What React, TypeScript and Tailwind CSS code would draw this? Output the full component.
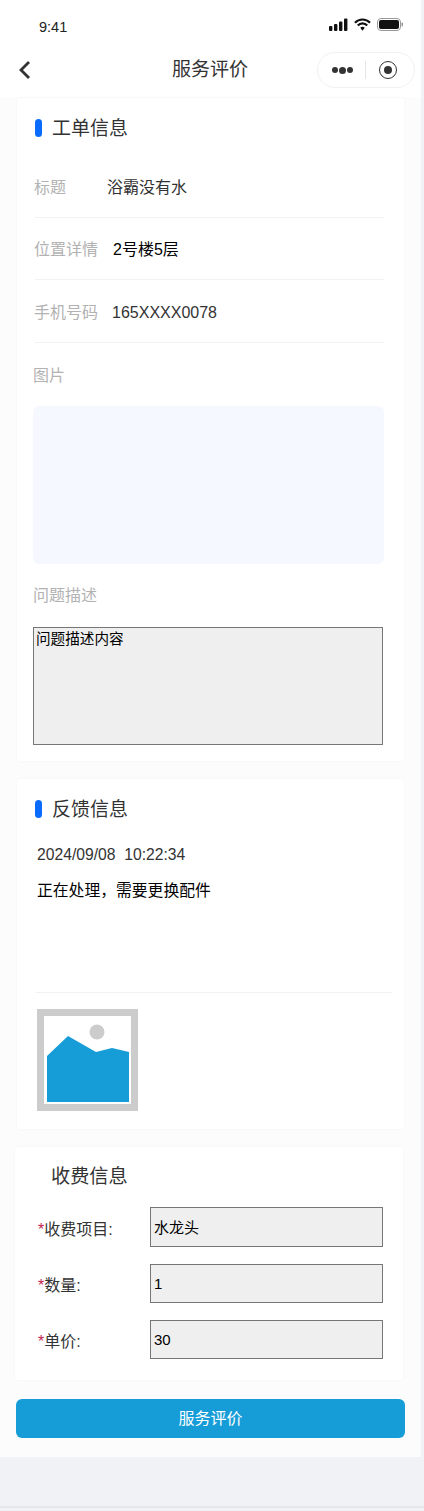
const font = "font-['Liberation_Sans','Noto_Sans_CJK_SC',sans-serif]"

function SectionTitle({ title }: { title: string }) {
  return (
    <div className="flex items-center h-[18px]">
      <span className="w-[7px] h-[18px] rounded-full bg-[#0a6cff]" />
      <span className="ml-[10px] pt-[2px] text-[19px] leading-[26px] text-[#333333]">{title}</span>
    </div>
  )
}

function InfoRow({ label, value, gap, valueClass }: { label: string; value: string; gap: string; valueClass: string }) {
  return (
    <div className="flex items-center h-[62.5px] pt-[4px] border-b border-[#f1f2f3] text-[16px]">
      <span className="-ml-[1px] text-[#b2b2b2]">{label}</span>
      <span className={`${gap} ${valueClass}`}>{value}</span>
    </div>
  )
}

function FeeRow({ label, value, height }: { label: string; value: string; height: string }) {
  return (
    <div className="flex items-center">
      <span className="shrink-0 w-[112px] ml-[23px] pt-[5px] text-[16px] leading-[22px] text-[#333333]">
        <span className="text-[#c2254d]">*</span>
        {label}:
      </span>
      <input
        readOnly
        value={value}
        className={`${height} w-[233px] border border-[#767676] bg-[#efefef] pl-[3px] pb-[1px] text-[15px] text-black outline-none`}
      />
    </div>
  )
}

export default function App() {
  return (
    <div className={`${font} w-[424px] h-[1511px] bg-[#f0f2f6] overflow-hidden`}>
      <div className="w-[421px] h-[1457px] bg-[#fcfcfd]">
        <div className="h-[97px] bg-white">
          <div className="flex items-center justify-between h-[52px] pl-[39px] pr-[17px]">
            <span className="text-[14.5px] mt-[3px] text-[#222222]">9:41</span>
            <div className="flex items-center gap-[6px] -mt-[3px]">
              <svg width="19" height="13" viewBox="0 0 19 13">
                <rect x="0" y="8" width="3.4" height="5" rx="1" fill="#111" />
                <rect x="5" y="6" width="3.4" height="7" rx="1" fill="#111" />
                <rect x="10" y="3.5" width="3.4" height="9.5" rx="1" fill="#111" />
                <rect x="15" y="0.5" width="3.4" height="12.5" rx="1" fill="#111" />
              </svg>
              <svg width="17" height="13" viewBox="0 0 18 13">
                <path d="M1 4.6 A11 11 0 0 1 17 4.6" fill="none" stroke="#111" strokeWidth="2.2" />
                <path d="M4 7.6 A6.6 6.6 0 0 1 14 7.6" fill="none" stroke="#111" strokeWidth="2.2" />
                <path d="M6.6 10 A3 3 0 0 1 11.4 10 L9 13 Z" fill="#111" />
              </svg>
              <svg width="27" height="13" viewBox="0 0 27 13">
                <rect x="0.5" y="0.5" width="23" height="12" rx="3.5" fill="none" stroke="#999" />
                <rect x="2" y="2" width="20" height="9" rx="2" fill="#111" />
                <rect x="24.5" y="4.5" width="1.5" height="4" rx="0.7" fill="#999" />
              </svg>
            </div>
          </div>
          <div className="relative flex items-center h-[36px]">
            <svg className="ml-[17px]" width="16" height="22" viewBox="0 0 16 22">
              <path d="M12 3 L4 11 L12 19" fill="none" stroke="#333333" strokeWidth="2.8" />
            </svg>
            <span className="absolute left-[172px] text-[19px] leading-[26px] text-[#333333]">服务评价</span>
            <div className="absolute left-[317px] w-[98px] h-[36px] rounded-full border border-[#f1f1f1] flex items-center">
              <div className="flex items-center gap-[1px] ml-[14px]">
                <span className="w-[6px] h-[6px] rounded-full bg-[#333333]" />
                <span className="w-[7px] h-[7px] rounded-full bg-[#333333]" />
                <span className="w-[6px] h-[6px] rounded-full bg-[#333333]" />
              </div>
              <span className="w-px h-[18px] bg-[#e5e5e5] ml-[12px]" />
              <span className="ml-[13px] w-[18px] h-[18px] rounded-full border-[1.5px] border-[#333333] flex items-center justify-center">
                <span className="w-2 h-2 rounded-full bg-[#333333]" />
              </span>
            </div>
          </div>
        </div>

        <div className="ml-[17px] w-[387px] h-[663px] mt-px bg-white rounded-[4px] shadow-[0_0_3px_rgba(0,0,0,0.04)] pt-[21px] pl-[18px] pr-[20px]">
          <SectionTitle title="工单信息" />
          <div className="mt-[18px]">
            <InfoRow label="标题" value="浴霸没有水" gap="ml-[41px]" valueClass="text-[#333333]" />
            <InfoRow label="位置详情" value="2号楼5层" gap="ml-[15px]" valueClass="text-black" />
            <InfoRow label="手机号码" value="165XXXX0078" gap="ml-[14px]" valueClass="text-[#333333]" />
          </div>
          <div className="mt-[21px] -ml-[2px] text-[16px] leading-[24px] text-[#b2b2b2]">图片</div>
          <div className="mt-[18px] -ml-[2px] w-[351px] h-[158px] rounded-[6px] bg-[#f5f8fe]" />
          <div className="mt-[20px] -ml-[2px] text-[16px] leading-[24px] text-[#b2b2b2]">问题描述</div>
          <textarea
            readOnly
            value="问题描述内容"
            className="block mt-[19px] -ml-[2px] w-[350px] h-[118px] border border-[#767676] bg-[#efefef] px-[2px] py-0 text-[14.6px] leading-[23px] text-black outline-none resize-none"
          />
        </div>

        <div className="ml-[17px] w-[387px] h-[350px] mt-[18px] bg-white rounded-[4px] shadow-[0_0_3px_rgba(0,0,0,0.04)] pt-[21px]">
          <div className="pl-[18px]">
            <SectionTitle title="反馈信息" />
          </div>
          <div className="mt-[26px] ml-[20px] text-[15.7px] leading-[22px] text-[#333333]">2024/09/08&nbsp;&nbsp;10:22:34</div>
          <div className="mt-[14px] ml-[20px] text-[15.8px] leading-[22px] text-black">正在处理，需要更换配件</div>
          <div className="mt-[90px] ml-[19px] mr-[12px] border-t border-[#f1f2f3]" />
          <div className="mt-[16px] ml-[20px]">
            <svg width="101" height="102" viewBox="0 0 101 102">
              <rect x="3.5" y="3.5" width="94" height="95" fill="white" stroke="#cccccc" strokeWidth="7" />
              <circle cx="60" cy="23" r="7.5" fill="#cccccc" />
              <path d="M10 47 L31 27 L59 43 L75 39 L92 43 L92 93 L10 93 Z" fill="#169dd8" />
            </svg>
          </div>
        </div>

        <div className="ml-[15px] w-[388px] h-[233px] mt-[18px] bg-white rounded-[4px] shadow-[0_0_3px_rgba(0,0,0,0.04)] pt-[17px]">
          <div className="pl-[36px] text-[19.2px] leading-[26px] text-[#333333]">收费信息</div>
          <div className="mt-[17px] flex flex-col gap-[17px]">
            <FeeRow label="收费项目" value="水龙头" height="h-10" />
            <FeeRow label="数量" value="1" height="h-[39px]" />
            <FeeRow label="单价" value="30" height="h-[39px]" />
          </div>
        </div>

        <button className="block ml-[16px] mt-[19px] w-[389px] h-[39px] rounded-[6px] bg-[#169dd8] text-[16px] text-white">
          服务评价
        </button>
      </div>
      <div className="mt-[49px] h-[2px] bg-[#e6e7ea]" />
    </div>
  )
}
